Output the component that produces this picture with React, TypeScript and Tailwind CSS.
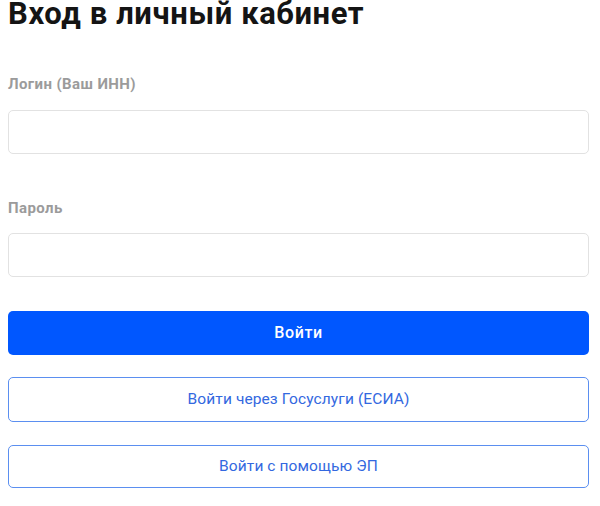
import React from "react";

export default function App() {
  return (
    <div className="w-[600px] h-[506px] bg-white px-2 pt-px font-['Roboto',sans-serif]">
      <h1 className="-mt-[5px] text-[31px] leading-[36px] tracking-[0.6px] font-bold text-[#141414]">Вход в личный кабинет</h1>
      <div className="mt-[42px] text-[15px] leading-[20px] tracking-[0.4px] font-bold text-[#9b9b9b]">Логин (Ваш ИНН)</div>
      <input className="mt-4 block w-[581px] h-[44px] rounded-[5px] border border-[#e2e2e2] outline-none" />
      <div className="mt-[44px] text-[15px] leading-[20px] tracking-[0.4px] font-bold text-[#9b9b9b]">Пароль</div>
      <input type="password" className="mt-[15px] block w-[581px] h-[44px] rounded-[5px] border border-[#e2e2e2] outline-none" />
      <button className="mt-[34px] flex items-center justify-center w-[581px] h-[44px] rounded-[5px] bg-[#0057ff] text-white text-[16px] tracking-[0.6px] font-medium">Войти</button>
      <button className="mt-[22px] flex items-center justify-center w-[581px] h-[45px] rounded-[5px] border border-[#5b8ff0] text-[#3368e0] text-[15.5px] tracking-[0.1px]">Войти через Госуслуги (ЕСИА)</button>
      <button className="mt-[23px] flex items-center justify-center w-[581px] h-[43px] rounded-[5px] border border-[#5b8ff0] text-[#3368e0] text-[15.5px] tracking-[0.1px]">Войти с помощью ЭП</button>
    </div>
  );
}
